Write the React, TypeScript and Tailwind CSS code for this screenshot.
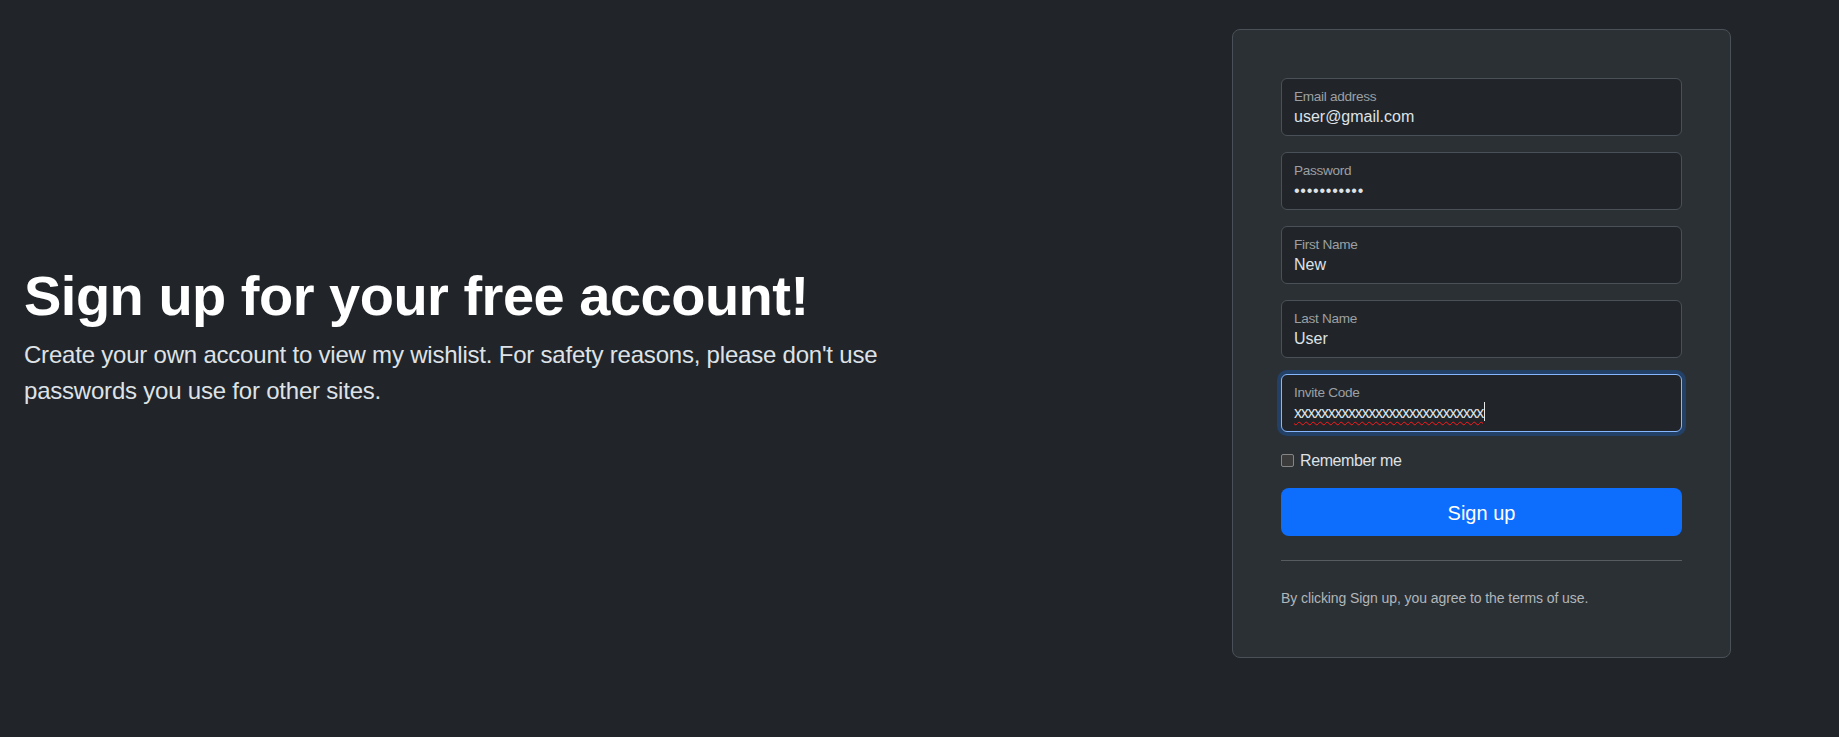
import React from "react";

function Field({
  label,
  children,
  focused = false,
}: {
  label: string;
  children: React.ReactNode;
  focused?: boolean;
}) {
  return (
    <div
      className={
        focused
          ? "h-[58px] rounded-md border border-[#86b7fe] bg-[#212529] px-3 pt-[9px] shadow-[0_0_0_4px_rgba(13,110,253,0.25)]"
          : "h-[58px] rounded-md border border-[#495057] bg-[#212529] px-3 pt-[9px]"
      }
    >
      <div className="text-[13.6px] leading-[17px] tracking-[-0.3px] text-[#9ca0a4]">{label}</div>
      <div className="text-[16px] leading-[24px] text-[#dee2e6]">{children}</div>
    </div>
  );
}

export default function App() {
  return (
    <div className="h-[737px] w-full overflow-hidden bg-[#212529] pt-[29px] font-['Liberation_Sans',Arial,sans-serif] text-[#dee2e6]">
      <div className="flex items-center pr-[108px]">
        <div className="flex-1 pl-[24px]">
          <h1 className="mb-[13px] text-[56px] font-bold leading-[56px] tracking-[-0.5px] text-white">
            Sign up for your free account!
          </h1>
          <p className="mb-[10px] text-[24px] leading-[36px] tracking-[-0.21px] text-[#dee2e6]">
            Create your own account to view my wishlist. For safety reasons, please don't use
            <br />
            passwords you use for other sites.
          </p>
        </div>
        <div className="w-[499px] shrink-0 rounded-lg border border-[#495057] bg-[#2b3035] p-[48px]">
          <div className="flex flex-col gap-4">
            <Field label="Email address">user@gmail.com</Field>
            <Field label="Password">
              <span className="tracking-[0.77px]">•••••••••••</span>
            </Field>
            <Field label="First Name">New</Field>
            <Field label="Last Name">User</Field>
            <Field label="Invite Code" focused>
              <div className="flex h-[24px] items-start">
                <span className="tracking-[-1.25px] underline decoration-[#ff1a1a] decoration-wavy decoration-1 underline-offset-[3px]">
                  xxxxxxxxxxxxxxxxxxxxxxxxxxxx
                </span>
                <span className="ml-[1px] mt-[1px] h-[19px] w-px bg-[#e8e8e8]" />
              </div>
            </Field>
          </div>
          <div className="mt-4 flex h-[24px] items-center text-[16px] leading-[24px]">
            <span className="h-[13px] w-[13px] rounded-[2px] border border-[#858585] bg-[#3b3b3b]" />
            <span className="ml-[6px] pt-[2px] tracking-[-0.4px] text-[#dee2e6]">Remember me</span>
          </div>
          <div className="mt-4 flex h-[48px] w-full items-center justify-center rounded-lg bg-[#0d6efd] pt-[2px] text-[20px] leading-[30px] text-white">
            Sign up
          </div>
          <div className="my-6 h-px w-full bg-[#585c61]" />
          <div className="pt-[2px] text-[14px] leading-[22px] tracking-[-0.08px] text-[#b1b6ba]">
            By clicking Sign up, you agree to the terms of use.
          </div>
        </div>
      </div>
    </div>
  );
}
